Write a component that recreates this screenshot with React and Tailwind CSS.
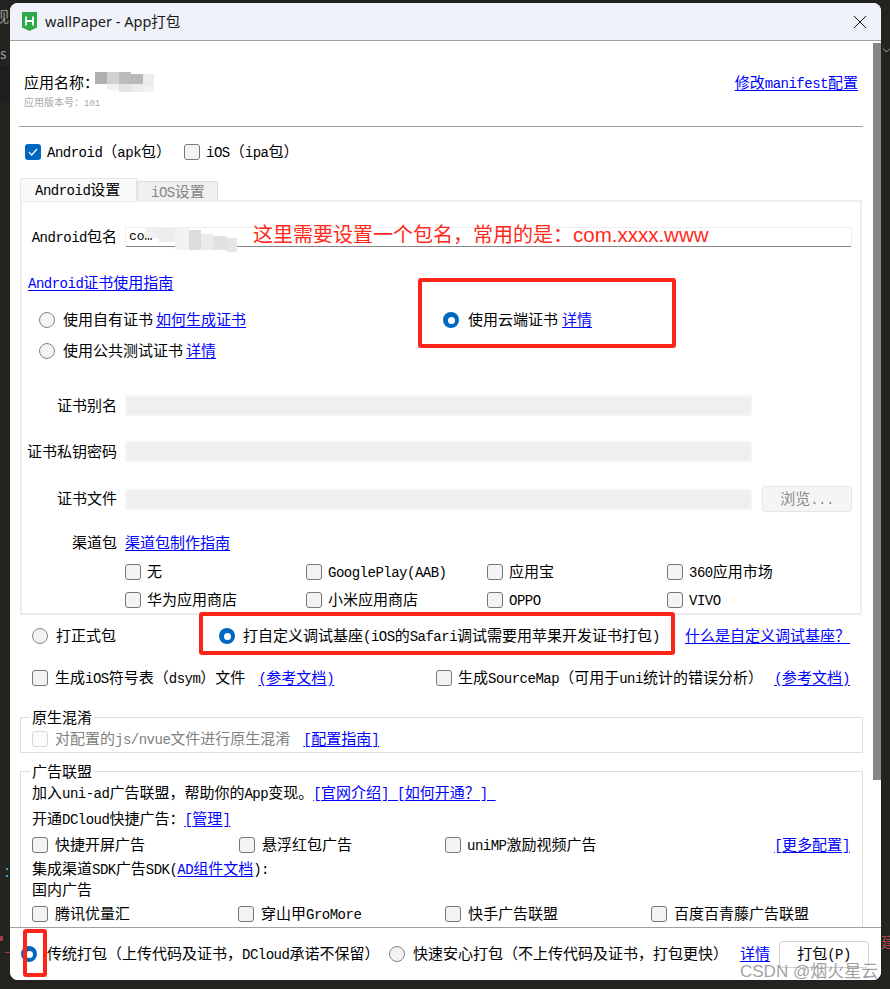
// full-width punctuation, kept as escapes so an editor can't normalise them away
const LP = "\uFF08";
const RP = "\uFF09";
const CM = "\uFF0C";
const CL = "\uFF1A";
const QM = "\uFF1F";

// ASCII runs are squeezed to half a CJK cell so that they sit beside the 15px glyphs as in SimSun
function T({ children, className = "" }) {
  const parts = String(children).match(/[\x20-\x7e]+|[^\x20-\x7e]+/g) || [];
  return (
    <span className={`relative -top-px whitespace-pre ${className}`}>
      {parts.map((part, i) =>
        /^[\x20-\x7e]/.test(part) ? (
          <span key={i} className="font-['Liberation_Mono',monospace] text-[14px] leading-none tracking-[-0.5px]">{part}</span>
        ) : (
          <span key={i}>{part}</span>
        )
      )}
    </span>
  );
}

function A({ children, className = "" }) {
  return <a className={`text-[#0000ff] whitespace-pre ${className}`}><T className="underline underline-offset-2">{children}</T></a>;
}

function Box({ checked, disabled }) {
  if (checked) {
    return (
      <span className="w-4 h-4 shrink-0 rounded-[3px] bg-[#0067c0] flex items-center justify-center">
        <svg width="10" height="8" viewBox="0 0 10 8" fill="none" stroke="#fff" strokeWidth="1.2"><path d="M1 4.2 3.7 7 9 1" /></svg>
      </span>
    );
  }
  return <span className={`w-4 h-4 shrink-0 rounded-[3px] border ${disabled ? "border-[#d8d8d8] bg-[#fbfbfb]" : "border-[#777] bg-[#f3f3f3]"}`} />;
}

function Radio({ checked }) {
  if (checked) {
    return (
      <span className="w-4 h-4 shrink-0 rounded-full bg-[#0067c0] flex items-center justify-center">
        <span className="w-[7px] h-[7px] rounded-full bg-white" />
      </span>
    );
  }
  return <span className="w-4 h-4 shrink-0 rounded-full border border-[#858585] bg-[#f3f3f3]" />;
}

function Check({ label, disabled, gap = "gap-[7px]" }) {
  return (
    <label className={`flex items-center ${gap} whitespace-nowrap`}>
      <Box disabled={disabled} />
      <span className={disabled ? "text-[#808080]" : ""}><T>{label}</T></span>
    </label>
  );
}

function Field({ label, className = "" }) {
  return (
    <div className={`flex items-center gap-2 ${className}`}>
      <span className="w-[95px] text-right whitespace-nowrap"><T>{label}</T></span>
      <div className="w-[627px] h-[21px] bg-[#efefef] border-2 border-[#f5f5f5]" />
    </div>
  );
}

function Mosaic({ className, cells, width, height }) {
  return (
    <svg className={`absolute ${className}`} width={width} height={height}>
      {cells.map(([x, y, w, h, fill], i) => (
        <rect key={i} x={x} y={y} width={w} height={h} fill={fill} />
      ))}
    </svg>
  );
}

const nameCells = [
  [0, 0, 12, 12, "#b0b0b0"], [12, 0, 12, 12, "#d2d2d2"], [24, 0, 12, 12, "#bcbcbc"], [36, 2, 12, 10, "#b8b8b8"], [48, 2, 11, 12, "#ececec"],
  [12, 12, 12, 6, "#f0f0f0"], [24, 12, 12, 8, "#e4e4e4"], [36, 12, 12, 8, "#ececec"], [48, 14, 11, 6, "#f2f2f2"],
];

const pkgCells = [
  [10, 0, 14, 10, "#f0f0f0"], [24, 0, 16, 14, "#ececec"], [40, 0, 14, 22, "#f2f2f2"], [54, 2, 12, 20, "#dcdcdc"],
  [66, 6, 12, 16, "#ebebeb"], [78, 8, 14, 14, "#e2e2e2"], [92, 10, 10, 14, "#e6e6e6"],
];

const channels = ["无", "GooglePlay(AAB)", "应用宝", "360应用市场", "华为应用商店", "小米应用商店", "OPPO", "VIVO"];

function AndroidPanel() {
  return (
    <div className="w-[842px] h-[415px] -mt-px border-2 border-[#ededed] bg-white">
      <div className="flex items-center gap-2 mt-[25px] h-5">
        <span className="w-[95px] text-right whitespace-nowrap"><T>Android包名</T></span>
        <div className="w-[727px] h-5 border border-[#eeeeee] border-b-[#858585] rounded-[2px] flex items-center pl-[3px]">
          <span className="font-['Liberation_Mono',monospace] text-[13px]">com</span>
        </div>
      </div>
      <div className="h-5 mt-[26px] pl-[6px] flex items-center"><A>Android证书使用指南</A></div>
      <div className="flex mt-[17px]">
        <div className="w-[421px] pl-[17px]">
          <div className="h-5 flex items-center gap-2"><Radio /><span><T>使用自有证书</T><A className="ml-[3px]">如何生成证书</A></span></div>
          <div className="h-5 mt-[11px] flex items-center gap-2"><Radio /><span><T>使用公共测试证书</T><A className="ml-[3px]">详情</A></span></div>
        </div>
        <div className="h-5 flex items-center gap-[9px]"><Radio checked /><span><T>使用云端证书</T><A className="ml-[4px]">详情</A></span></div>
      </div>
      <Field label="证书别名" className="mt-[34px]" />
      <Field label="证书私钥密码" className="mt-[25px]" />
      <div className="flex items-center mt-[24px] h-[26px]">
        <Field label="证书文件" />
        <button className="ml-[10px] w-[90px] h-[26px] bg-[#f5f5f5] border border-[#e5e5e5] rounded-[3px] text-[#8a8a8a]"><T>浏览...</T></button>
      </div>
      <div className="flex items-center gap-2 mt-[21px] h-5">
        <span className="w-[95px] text-right"><T>渠道包</T></span>
        <A>渠道包制作指南</A>
      </div>
      <div className="grid grid-cols-[181px_181px_180px_1fr] auto-rows-[20px] gap-y-2 mt-[9px] pl-[103px]">
        {channels.map((c) => <Check key={c} label={c} gap="gap-[6px]" />)}
      </div>
    </div>
  );
}

function PackageOptions() {
  return (
    <>
      <div className="flex items-center h-5 mt-[11px] pl-3 pr-[13px]">
        <label className="w-[187px] flex items-center gap-2"><Radio /><T>打正式包</T></label>
        <label className="flex items-center gap-2 whitespace-nowrap"><Radio checked /><T>打自定义调试基座(iOS的Safari调试需要用苹果开发证书打包)</T></label>
        <A className="ml-auto">{`什么是自定义调试基座${QM}`}</A>
      </div>
      <div className="flex items-center h-5 mt-[22px] pl-3 pr-[13px]">
        <div className="w-[404px] flex items-center">
          <Check label={`生成iOS符号表${LP}dsym${RP}文件`} />
          <A className="ml-[13px]">(参考文档)</A>
        </div>
        <Check label={`生成SourceMap${LP}可用于uni统计的错误分析${RP}`} gap="gap-[6px]" />
        <A className="ml-auto">(参考文档)</A>
      </div>
    </>
  );
}

function Groups() {
  return (
    <>
      <fieldset className="w-[843px] h-[46px] mt-[19px] border border-[#dcdcdc] pl-[11px]">
        <legend className="h-5 leading-5 px-[2px] -ml-[2px]">原生混淆</legend>
        <div className="h-5 mt-[2px] flex items-center">
          <Check label="对配置的js/nvue文件进行原生混淆" disabled />
          <A className="ml-[13px]">[配置指南]</A>
        </div>
      </fieldset>
      <fieldset className="w-[843px] h-[220px] mt-2 border border-[#dcdcdc] pl-[11px] pr-3">
        <legend className="h-5 leading-5 px-[2px] -ml-[2px]">广告联盟</legend>
        <div className="h-5 mt-[2px] flex items-center whitespace-nowrap">
          <T>{`加入uni-ad广告联盟${CM}帮助你的App变现。`}</T><A>{`[官网介绍] [如何开通${QM}] `}</A>
        </div>
        <div className="h-5 mt-[6px] flex items-center whitespace-nowrap"><T>{`开通DCloud快捷广告${CL}`}</T><A>[管理]</A></div>
        <div className="h-5 mt-[6px] grid grid-cols-[207px_206px_1fr_auto] items-center">
          <Check label="快捷开屏广告" />
          <Check label="悬浮红包广告" />
          <Check label="uniMP激励视频广告" gap="gap-[6px]" />
          <A>[更多配置]</A>
        </div>
        <div className="h-5 mt-1 flex items-center whitespace-nowrap"><T>集成渠道SDK广告SDK(</T><A>AD组件文档</A><T>):</T></div>
        <div className="h-5 mt-px flex items-center"><T>国内广告</T></div>
        <div className="h-5 mt-1 grid grid-cols-[206px_207px_206px_1fr] items-center">
          <Check label="腾讯优量汇" />
          <Check label="穿山甲GroMore" />
          <Check label="快手广告联盟" />
          <Check label="百度百青藤广告联盟" />
        </div>
      </fieldset>
    </>
  );
}

export default function App() {
  return (
    <div className="relative w-[890px] h-[989px] overflow-hidden bg-[#23241f] pl-[10px] pt-[3px] text-[15px] leading-5 text-black font-['Noto_Sans_CJK_SC','Noto_Sans',sans-serif]">
      {/* bits of the editor behind the dialog */}
      <span className="absolute left-[-6px] top-[6px] text-[15px] text-[#9a9a9a]">视</span>
      <span className="absolute left-0 top-[43px] text-[14px] text-[#9a9a9a]">s</span>
      <div className="absolute left-0 top-[66px] w-[10px] h-[35px] bg-[#1e1e1e]" />
      <div className="absolute left-[6px] top-[868px] w-[2px] h-[2px] bg-[#3ba7d8]" />
      <div className="absolute left-[6px] top-[875px] w-[2px] h-[2px] bg-[#3ba7d8]" />
      <div className="absolute left-0 top-[936px] w-[3px] h-[5px] bg-[#a04040]" />
      <div className="absolute left-[5px] top-[952px] w-[5px] h-px bg-[#a04040]" />
      <span className="absolute left-[881px] top-[932px] text-[15px] text-[#b04a4a]">建</span>
      <svg className="absolute left-[883px] top-[48px]" width="7" height="5" viewBox="0 0 7 5" fill="none" stroke="#aaa"><path d="M0 0.5 3.5 4 7 0.5" /></svg>

      <div className="relative w-[871px] h-[977px] rounded-[8px] overflow-hidden bg-white flex flex-col">
        <div className="h-[38px] shrink-0 bg-[#eff3f9] border-b border-[#a0a0a0] flex items-center pl-3">
          <svg width="15" height="19" viewBox="0 0 15 19">
            <path d="M0 0h15v15.5L7.5 19 0 15.5z" fill="#2fa84a" />
            <path d="M4 4.5v9M11 4.5v9M4 9h7" stroke="#fff" strokeWidth="1.8" fill="none" />
          </svg>
          <span className="ml-2 -mt-[2px] text-[14.5px] font-['Noto_Sans','Noto_Sans_CJK_SC',sans-serif] text-[#1a1a1a]">wallPaper - App打包</span>
          <svg className="ml-auto mr-[15px]" width="12" height="12" viewBox="0 0 12 12" stroke="#111" strokeWidth="1"><path d="M0 0 12 12M12 0 0 12" /></svg>
        </div>

        <div className="relative flex-1 overflow-hidden pl-[10px] pr-[18px]">
          <div className="flex items-center h-5 mt-[32px] pl-1 pr-[5px]">
            <T>{`应用名称${CL}`}</T>
            <A className="ml-auto">修改manifest配置</A>
          </div>
          <div className="h-[14px] mt-[2px] pl-1 text-[10px] leading-[14px] text-[#a8a8a8]">{`应用版本号${CL}`}<span className="font-['Liberation_Mono',monospace] text-[9px]">101</span></div>
          <div className="h-px mt-[17px] -ml-px bg-[#a0a0a0]" />
          <div className="flex items-center h-5 mt-[15px] pl-[5px]">
            <label className="w-[159px] flex items-center gap-[6px]"><Box checked /><T>{`Android${LP}apk包${RP}`}</T></label>
            <label className="flex items-center gap-[6px]"><Box /><T>{`iOS${LP}ipa包${RP}`}</T></label>
          </div>

          <div className="flex items-end h-[23px] mt-4">
            <div className="relative z-10 w-[117px] h-[23px] bg-[#fafafa] border border-b-0 border-[#e5e5e5] pl-[14px] leading-[22px]"><T>Android设置</T></div>
            <div className="w-[81px] h-5 bg-[#f0f0f0] border border-b-0 border-[#dedede] pl-[13px] leading-[19px] text-[#858585]"><T>iOS设置</T></div>
          </div>
          <AndroidPanel />
          <PackageOptions />
          <Groups />

          {/* screenshot annotations */}
          <Mosaic className="left-[85px] top-[31px]" width={59} height={20} cells={nameCells} />
          <Mosaic className="left-[125px] top-[187px]" width={102} height={24} cells={pkgCells} />
          <span className="absolute left-[243px] top-[179px] text-[20px] leading-7 text-[#ff2a1a] whitespace-nowrap font-['Noto_Sans_CJK_SC',sans-serif]">{`这里需要设置一个包名${CM}常用的是${CL}`}<span className="font-['Liberation_Sans',sans-serif] text-[20.5px] leading-none">com.xxxx.www</span></span>
          <div className="absolute left-[408px] top-[237px] w-[258px] h-[70px] border-4 border-[#ff2418] rounded-[3px]" />
          <div className="absolute left-[189px] top-[571px] w-[476px] h-[43px] border-4 border-[#ff2418] rounded-[3px]" />
          <div className="absolute right-0 top-[2px] w-2 h-[737px] bg-[#878787]" />
        </div>

        <div className="h-[53px] shrink-0 border-t border-[#a0a0a0] flex items-center pl-[11px] bg-white">
          <label className="w-[368px] flex items-center gap-[10px] whitespace-nowrap"><Radio checked /><T>{`传统打包${LP}上传代码及证书${CM}DCloud承诺不保留${RP}`}</T></label>
          <label className="w-[351px] flex items-center gap-2 whitespace-nowrap"><Radio /><T>{`快速安心打包${LP}不上传代码及证书${CM}打包更快${RP}`}</T></label>
          <A className="w-[39px]">详情</A>
          <button className="w-[90px] h-[27px] border border-[#d0d0d0] rounded-[4px] bg-white"><T>打包(P)</T></button>
        </div>

        <div className="absolute left-[13px] top-[926px] w-[24px] h-[48px] border-4 border-[#ff2418] rounded-[3px]" />
        <span className="absolute left-[730px] top-[957px] text-[17px] leading-6 text-[#8f8f8f]/85 whitespace-nowrap font-['Liberation_Sans','Noto_Sans_CJK_SC',sans-serif]">CSDN @烟火星云</span>
      </div>
    </div>
  );
}
